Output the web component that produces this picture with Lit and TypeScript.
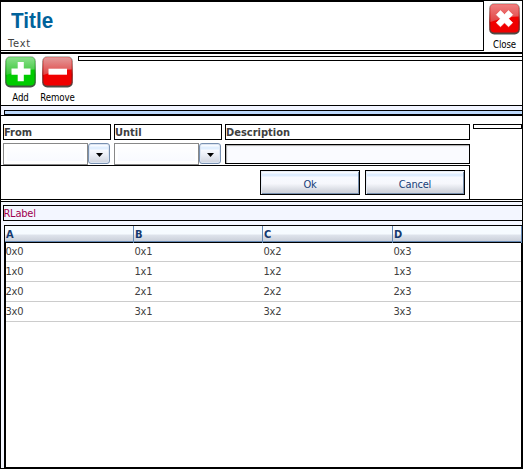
import { LitElement, html, css, svg } from "lit";
import { customElement, property } from "lit/decorators.js";

const glyphs: Record<string, unknown> = {
  add: svg`<path d="M12.7 6h6.1v6.5h6.7v6.2h-6.7v6.5h-6.1v-6.5h-6.2v-6.2h6.2z" fill="#fff"/>`,
  remove: svg`<path d="M6.5 12.7h18.5v6h-18.5z" fill="#fff"/>`,
  close: svg`<path d="M11.5 7.5L15.5 11.5L19.5 7.5L23.7 11.7L19.7 15.7L23.7 19.7L19.5 23.8L15.5 19.8L11.5 23.8L7.3 19.7L11.3 15.7L7.3 11.7z" fill="#fff" stroke="#fff" stroke-width=".6" stroke-linejoin="round"/>`,
};

@customElement("tool-button")
export class ToolButton extends LitElement {
  @property() kind = "add";
  @property() label = "";

  static styles = css`
    :host { display: flex; flex-direction: column; align-items: center; width: 37px; }
    svg { display: block; width: 31px; height: 32px; }
    span { font: 9.6px/12px "DejaVu Sans Condensed", "DejaVu Sans", sans-serif; color: #000; margin-top: 4px; white-space: nowrap; letter-spacing: -0.1px; }
  `;

  render() {
    const green = this.kind === "add";
    const top = green ? "#8be08b" : this.kind === "close" ? "#f08080" : "#e49a9a";
    const mid = green ? "#35c535" : "#e04444";
    const low = green ? "#00cc00" : "#f00000";
    const dark = green ? "#087808" : "#8a0808";
    return html`
      <svg viewBox="0 0 31 32">
        <defs>
          <linearGradient id="gloss" x2="0" y2="1">
            <stop offset="0" stop-color=${top} /><stop offset="1" stop-color=${mid} />
          </linearGradient>
          <linearGradient id="edge" x2="0" y2="1">
            <stop offset="0" stop-color="#a9b0a9" /><stop offset=".6" stop-color=${dark} /><stop offset="1" stop-color="#4a4f4a" />
          </linearGradient>
        </defs>
        <rect x=".2" y=".2" width="30.6" height="31.2" rx="5" fill="url(#edge)" />
        <rect x="1.4" y="1.2" width="28.2" height="28.2" rx="4" fill=${low} />
        <path d="M1.4 5.2a4 4 0 0 1 4-4h20.2a4 4 0 0 1 4 4v8.3Q17 13.5 1.4 19z" fill="url(#gloss)" />
        ${glyphs[this.kind]}
      </svg>
      <span>${this.label}</span>
    `;
  }
}

@customElement("app-root")
export class AppRoot extends LitElement {
  static styles = css`
    * { box-sizing: border-box; }
    :host {
      box-sizing: border-box; display: flex; flex-direction: column; width: 523px; height: 469px; overflow: hidden;
      border: 1px solid #000; background: #fff; color: #404040;
      font: 11px/14px "DejaVu Sans Condensed", "DejaVu Sans", sans-serif;
    }
    .header { display: flex; height: 52px; flex: none; border-bottom: 1px solid #000; padding-bottom: 1px; }
    .titles { width: 483px; height: 50px; border: solid #000; border-width: 1px 1px 1px 0; padding: 7px 0 0 7px; }
    .title { font: bold 22.5px/23px "Liberation Sans", Arial, sans-serif; color: #00629b; margin-left: 2.5px; transform: scaleX(.92); transform-origin: 0 0; }
    .sub { font-size: 11px; line-height: 14px; margin-top: 5px; letter-spacing: .8px; }
    .close { width: 38px; padding: 2px 0 0 2px; }
    .tools { display: flex; height: 53px; flex: none; border: solid #000; border-width: 1px 0; padding-top: 2px; }
    .tools tool-button:first-child { margin-left: 1px; }
    .blank { height: 5px; border: 1px solid #000; }
    .tools .blank { flex: 1; margin-left: 2px; border-right: 0; }
    .side { width: 49px; margin: 8px 0 0 3px; }
    .strip { height: 10px; flex: none; background: #f1f4ff; padding: 4px 0 0 3px; border-bottom: 1px solid #000; }
    .strip div { height: 5px; background: #bcd8fb; border: solid #000; border-width: 1px 0 1px 1px; }
    .form { display: flex; height: 84px; flex: none; border-bottom: 1px solid #000; }
    .top { width: 469px; height: 49px; padding: 8px 0 0 2px; display: grid;
      grid-template-columns: 108px 108px 245px; column-gap: 3px; row-gap: 3px; grid-template-rows: 16px 22px; }
    .name { border: 1px solid #000; font-weight: bold; line-height: 15px; height: 16px; }
    .combo { display: flex; height: 22px; }
    .box { width: 85px; border: 1px solid #888; background: linear-gradient(#fff, #f7f9ff); box-shadow: inset 0 0 0 3px #fff; }
    .drop { width: 22px; height: 21px; border: 1px solid #7890b0; border-radius: 3px; box-shadow: inset 0 0 0 1px #dce5f2;
      background: linear-gradient(#f8fbff 0 2px, #e1efff 3px 5px, #f8faff 6px, #eceff7 55%, #d0d4de); display: flex; align-items: center; justify-content: center; }
    .drop svg { width: 7px; height: 4px; margin-top: 3px; }
    .input { margin-top: 1px; height: 20px; border: 1px solid #000; background: #fafbff; box-shadow: inset 1px 1px 1px #aaa; }
    .actions { height: 35px; width: 469px; border: solid #000; border-width: 1px 1px 0 0; padding: 4px 4px 0 0; display: flex; justify-content: flex-end; gap: 5px; }
    .button { width: 100px; height: 25px; border: 1px solid #000; color: #174079; text-align: center; line-height: 27px; letter-spacing: -.2px;
      background: linear-gradient(#f8fbff 0 2px, #deedff 3px 5px, #f8faff 6px, #f6f7fc 55%, #d5d8e0 85%, #cbd0d9); box-shadow: inset 1px 1px #e4ebf5, inset -1px -1px #7890ae; }
    .list { flex: 1; min-height: 0; display: flex; flex-direction: column; margin-top: 1px; border-top: 1px solid #000; background: #f3f6ff; padding: 3px 0 0; }
    .caption { height: 16px; flex: none; margin-left: 2px; border: 1px solid #000; border-right: 0; color: #a00050; line-height: 15px; letter-spacing: -.2px; text-indent: -.6px; }
    .table { flex: 1; display: flex; flex-direction: column; margin: 4px 0 0 3px; border: solid #000; border-width: 1px 0 1px 1px; background: #fff; }
    .row { display: grid; grid-template-columns: 129px 129px 130px 1fr; height: 20px; border-bottom: 1px solid #ccc; line-height: 20px; letter-spacing: -.2px; }
    .body { flex: 1; border: solid #000; border-width: 0 1px; }
    .body .row:first-child { height: 19px; line-height: 18px; }
    .body .row span { margin-left: -.5px; }
    .head { height: 17px; flex: none; border-bottom: 1px solid #000; font-weight: bold; color: #16396f; letter-spacing: 0;
      background: linear-gradient(#f6fbff 0 8px, #dfe4ec 9px, #cbd0da 15px, #6488b4 15px); }
    .head span { border-right: 1px solid #6488b4; padding-left: 1px; line-height: 17px; }
  `;

  private combo() {
    return html`<div class="combo"><div class="box"></div><div class="drop">
      <svg viewBox="0 0 7 4"><path d="M0 0h7L3.5 4z" fill="#000" /></svg></div></div>`;
  }

  render() {
    const cols = [0, 1, 2, 3];
    return html`
      <div class="header">
        <div class="titles"><div class="title">Title</div><div class="sub">Text</div></div>
        <div class="close"><tool-button kind="close" label="Close"></tool-button></div>
      </div>
      <div class="tools">
        <tool-button kind="add" label="Add"></tool-button>
        <tool-button kind="remove" label="Remove"></tool-button>
        <div class="blank"></div>
      </div>
      <div class="strip"><div></div></div>
      <div class="form">
        <div>
          <div class="top">
            <div class="name">From</div><div class="name">Until</div><div class="name">Description</div>
            ${this.combo()}${this.combo()}<div class="input"></div>
          </div>
          <div class="actions"><div class="button">Ok</div><div class="button">Cancel</div></div>
        </div>
        <div class="blank side"></div>
      </div>
      <div class="list">
        <div class="caption">RLabel</div>
        <div class="table">
          <div class="row head">${["A", "B", "C", "D"].map((c) => html`<span>${c}</span>`)}</div>
          <div class="body">${cols.map((r) => html`<div class="row">${cols.map((c) => html`<span>${r}x${c}</span>`)}</div>`)}</div>
        </div>
      </div>
    `;
  }
}
